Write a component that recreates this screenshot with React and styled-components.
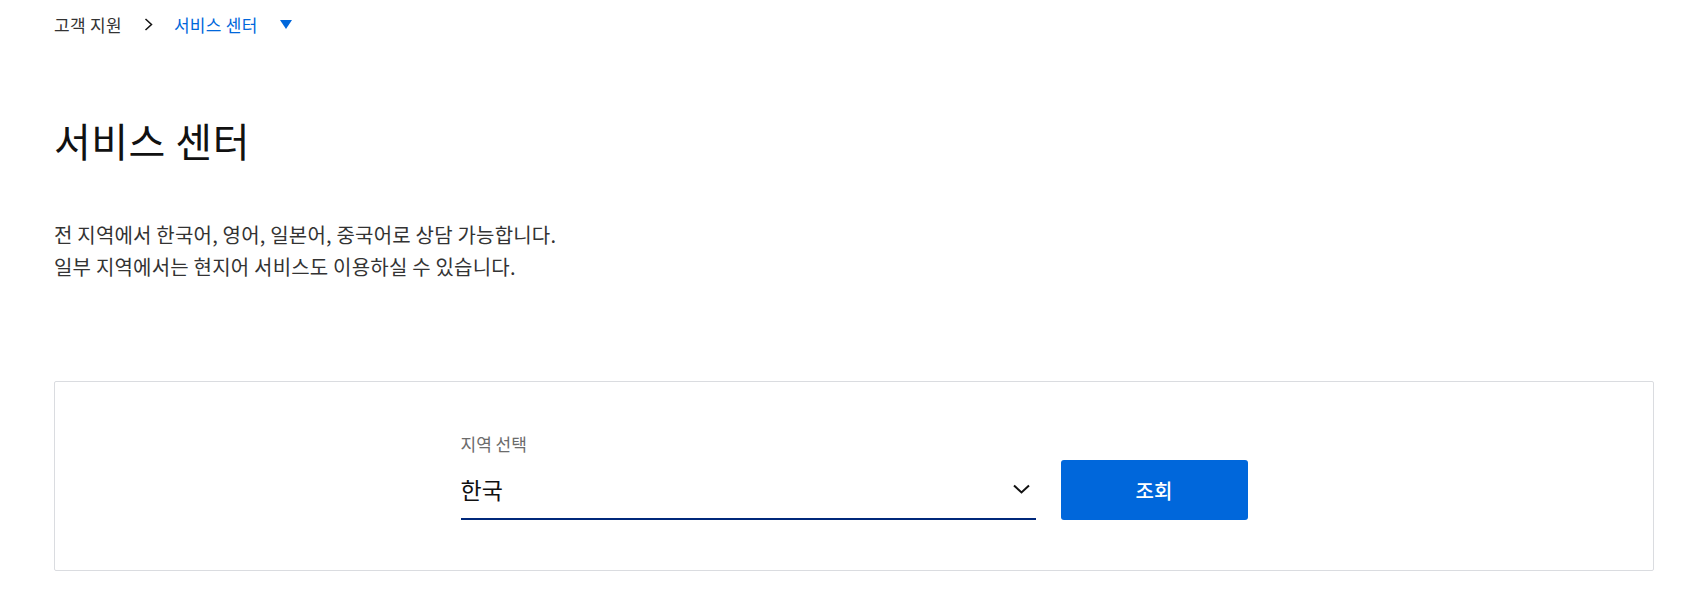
import React from 'react';
import styled, { createGlobalStyle } from 'styled-components';

const GlobalStyle = createGlobalStyle`
  body {
    margin: 0;
    background: #fff;
    font-family: 'Noto Sans CJK KR', 'Noto Sans', sans-serif;
    color: #111;
  }
`;

const Page = styled.div`
  width: 1600px;
  padding-left: 54px;
`;

const Breadcrumb = styled.nav`
  display: flex;
  align-items: center;
  height: 48px;
  font-size: 17px;
  letter-spacing: 0.3px;
`;

const Crumb = styled.span`
  color: ${(p) => (p.$active ? '#0067db' : '#333')};
`;

const Separator = styled.span`
  display: flex;
  margin: 0 21px 0 22px;
`;

const Caret = styled.span`
  margin-left: 22px;
  width: 0;
  height: 0;
  border-left: 6px solid transparent;
  border-right: 6px solid transparent;
  border-top: 9px solid #0067db;
`;

const Title = styled.h1`
  margin: 66px 0 0;
  font-size: 40px;
  font-weight: 400;
  line-height: 52px;
  letter-spacing: 0.5px;
  color: #111;
`;

const Description = styled.p`
  margin: 53px 0 0;
  font-size: 20px;
  line-height: 32px;
  letter-spacing: 0.2px;
  color: #333;
`;

const SearchBox = styled.section`
  margin-top: 98px;
  height: 190px;
  box-sizing: border-box;
  border: 1px solid #dadce0;
  border-radius: 2px;
  display: flex;
  align-items: center;
  justify-content: center;
`;

const Form = styled.div`
  display: flex;
  align-items: flex-end;
  gap: 25px;
  margin-top: 2px;
`;

const Field = styled.label`
  display: flex;
  flex-direction: column;
  width: 575px;
`;

const FieldLabel = styled.span`
  font-size: 17px;
  line-height: 20px;
  margin-bottom: 6px;
  color: #6b6b6b;
`;

const Select = styled.div`
  display: flex;
  align-items: center;
  justify-content: space-between;
  height: 60px;
  box-sizing: border-box;
  border-bottom: 2px solid #00287a;
  font-size: 23px;
  color: #111;
  padding-right: 6px;
`;

const SearchButton = styled.button`
  width: 187px;
  height: 60px;
  border: none;
  border-radius: 3px;
  background: #0067db;
  color: #fff;
  font-family: inherit;
  font-size: 20px;
  font-weight: 500;
  cursor: pointer;
`;

export default function App() {
  return (
    <>
      <GlobalStyle />
      <Page>
        <Breadcrumb>
          <Crumb>고객 지원</Crumb>
          <Separator>
            <svg width="9" height="13" viewBox="0 0 9 13" fill="none">
              <path d="M1.5 1l6 5.5-6 5.5" stroke="#111" strokeWidth="1.5" />
            </svg>
          </Separator>
          <Crumb $active>서비스 센터</Crumb>
          <Caret />
        </Breadcrumb>
        <Title>서비스 센터</Title>
        <Description>
          전 지역에서 한국어, 영어, 일본어, 중국어로 상담 가능합니다.
          <br />
          일부 지역에서는 현지어 서비스도 이용하실 수 있습니다.
        </Description>
        <SearchBox>
          <Form>
            <Field>
              <FieldLabel>지역 선택</FieldLabel>
              <Select>
                <span>한국</span>
                <svg width="17" height="10" viewBox="0 0 17 10" fill="none">
                  <path d="M1 1.5l7.5 7 7.5-7" stroke="#111" strokeWidth="2" />
                </svg>
              </Select>
            </Field>
            <SearchButton>조회</SearchButton>
          </Form>
        </SearchBox>
      </Page>
    </>
  );
}
